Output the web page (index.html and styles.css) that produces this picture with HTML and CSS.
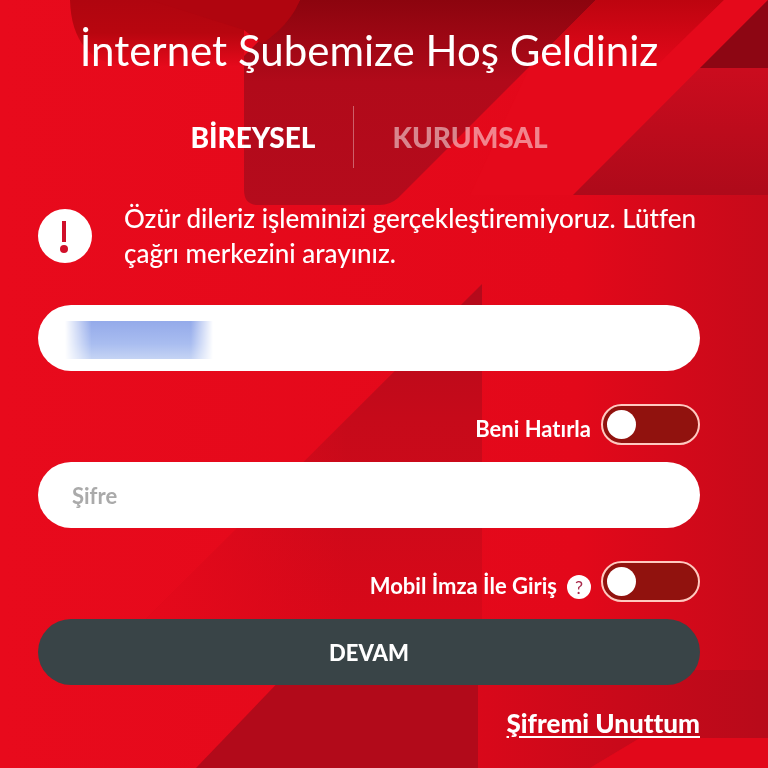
FILE: index.html
```
<!DOCTYPE html>
<html lang="tr">
<head>
  <meta charset="UTF-8">
  <meta name="viewport" content="width=device-width, initial-scale=1.0">
  <title>İnternet Şubesi</title>
  <link rel="stylesheet" href="styles.css">
</head>
<body>
  <svg class="backdrop" viewBox="0 0 768 768" preserveAspectRatio="none" aria-hidden="true">
    <defs>
      <linearGradient id="base" x1="0" y1="0" x2="1" y2="0">
        <stop offset="0" stop-color="#e80a1c"/>
        <stop offset="0.75" stop-color="#e3081a"/>
        <stop offset="1" stop-color="#c60a1a"/>
      </linearGradient>
      <linearGradient id="topFade" x1="0" y1="0" x2="0" y2="1">
        <stop offset="0" stop-color="#b0050f"/>
        <stop offset="0.5" stop-color="#b8060f"/>
        <stop offset="1" stop-color="#e5091b"/>
      </linearGradient>
      <linearGradient id="darkFade" x1="0" y1="0" x2="0" y2="1">
        <stop offset="0" stop-color="#8c040e"/>
        <stop offset="0.4" stop-color="#b10a1a"/>
        <stop offset="1" stop-color="#b50b1c"/>
      </linearGradient>
      <linearGradient id="topRight" x1="0" y1="0" x2="0" y2="1">
        <stop offset="0" stop-color="#bd040f"/>
        <stop offset="1" stop-color="#e3081a"/>
      </linearGradient>
      <linearGradient id="rightFade" x1="0" y1="1" x2="0" y2="0">
        <stop offset="0" stop-color="#ae0a1a"/>
        <stop offset="1" stop-color="#cb0c1e"/>
      </linearGradient>
      <linearGradient id="midFade" x1="0" y1="1" x2="0" y2="0">
        <stop offset="0" stop-color="#d80819"/>
        <stop offset="0.6" stop-color="#c60a1a"/>
        <stop offset="1" stop-color="#b30a1b"/>
      </linearGradient>
      <linearGradient id="midEdge" x1="0" y1="0" x2="1" y2="0">
        <stop offset="0" stop-color="#e5091b"/>
        <stop offset="0.6" stop-color="#e5091b" stop-opacity="0"/>
      </linearGradient>
      <linearGradient id="lowRight" x1="0" y1="0" x2="1" y2="0">
        <stop offset="0" stop-color="#d9081a"/>
        <stop offset="1" stop-color="#b80a1a"/>
      </linearGradient>
    </defs>
    <rect width="768" height="768" fill="url(#base)"/>
    <path d="M70 0C71 40 90 66 130 66H244V30L300 0z" fill="url(#topFade)"/>
    <path d="M300 0H596L398 198Q390 205 380 205H258Q244 205 244 190V56z" fill="url(#darkFade)"/>
    <path d="M300 0C293 16 284 28 262 44L244 30L150 0z" fill="#b0050f"/>
    <path d="M596 0H724L656 66H530z" fill="url(#topRight)"/>
    <path d="M724 0H768L573 195H470L530 66H656z" fill="#e5091b"/>
    <path d="M768 0V68H700z" fill="#8d0613"/>
    <path d="M700 68H768V195H573z" fill="url(#rightFade)"/>
    <path d="M482 284V620H145z" fill="url(#midFade)"/>
    <path d="M482 284V620H145z" fill="url(#midEdge)"/>
    <path d="M290 670H478V768H196z" fill="#b20a1a"/>
    <path d="M478 670H768V738H640L590 768H478z" fill="url(#lowRight)"/>
    <path d="M640 738H768V768H590z" fill="#e2081a"/>
  </svg>

  <main class="login">
    <h1 class="login-title">İnternet Şubemize Hoş Geldiniz</h1>

    <div class="tabs" role="tablist">
      <button type="button" class="tab active" role="tab" aria-selected="true">BİREYSEL</button>
      <button type="button" class="tab" role="tab" aria-selected="false">KURUMSAL</button>
    </div>

    <div class="alert" role="alert">
      <svg class="alert-icon" viewBox="0 0 54 54" aria-hidden="true">
        <circle cx="27" cy="27" r="27" fill="#fff"/>
        <path d="M26 12V33" stroke="#d0102a" stroke-width="4"/>
        <circle cx="26" cy="40" r="4" fill="#d0102a"/>
      </svg>
      <p class="alert-text">Özür dileriz işleminizi gerçekleştiremiyoruz. Lütfen çağrı merkezini arayınız.</p>
    </div>

    <form id="loginForm">
      <div class="field">
        <input type="text" class="field-input" id="customerNo" aria-label="Müşteri numarası">
        <span class="field-mask"></span>
      </div>

      <div class="option">
        <label class="option-label" for="remember">Beni Hatırla</label>
        <input type="checkbox" class="switch" id="remember">
      </div>

      <div class="field">
        <input type="password" class="field-input" id="password" placeholder="Şifre" aria-label="Şifre">
      </div>

      <div class="option">
        <label class="option-label" for="mobileSign">Mobil İmza İle Giriş</label>
        <button type="button" class="help">?</button>
        <input type="checkbox" class="switch" id="mobileSign">
      </div>

      <button type="submit" class="submit">DEVAM</button>
    </form>

    <a href="#" class="forgot">Şifremi Unuttum</a>
  </main>
</body>
</html>
```
FILE: styles.css
```
* {
  box-sizing: border-box;
}

body {
  margin: 0;
  min-height: 100vh;
  font-family: Lato, sans-serif;
  font-variant-ligatures: none;
  color: #fff;
  background: #e5091b;
}

button,
input {
  font-family: inherit;
}

.backdrop {
  position: fixed;
  inset: 0;
  z-index: -1;
  width: 100%;
  height: 100%;
}

.login {
  display: flex;
  flex-direction: column;
  padding: 22px 68px 24px 38px;
}

.login-title {
  margin: 0;
  font-size: 42px;
  font-weight: 400;
  line-height: 56px;
  text-align: center;
}

.tabs {
  display: flex;
  justify-content: center;
  margin-top: 28px;
}

.tab {
  height: 62px;
  padding: 0 38px 0 34px;
  border: none;
  background: none;
  font-size: 28px;
  font-weight: 900;
  color: rgba(255, 255, 255, 0.5);
  cursor: pointer;
}

.tab + .tab {
  padding: 0 34px 0 38px;
  border-left: 1px solid rgba(255, 255, 255, 0.35);
}

.tab.active {
  color: #fff;
}

.alert {
  display: flex;
  align-items: center;
  gap: 32px;
  margin-top: 33px;
}

.alert-icon {
  flex: none;
  width: 54px;
  height: 54px;
}

.alert-text {
  margin: 0;
  font-size: 26px;
  font-weight: 500;
  line-height: 35px;
}

form {
  margin-top: 34px;
}

.field {
  position: relative;
}

.field-input {
  display: block;
  width: 100%;
  height: 66px;
  padding: 0 34px;
  border: none;
  border-radius: 33px;
  outline: none;
  background: #fff;
  font-size: 22px;
  color: #333;
}

.field-input::placeholder {
  color: #aaa;
  font-weight: 700;
}

.field-mask {
  position: absolute;
  top: 16px;
  left: 27px;
  width: 148px;
  height: 38px;
  background: linear-gradient(#94aaea, #a9bdf0 60%, #c5d4f4);
  -webkit-mask-image: linear-gradient(90deg, transparent, #000 18%, #000 85%, transparent);
  mask-image: linear-gradient(90deg, transparent, #000 18%, #000 85%, transparent);
}

.option {
  display: flex;
  align-items: flex-end;
  justify-content: flex-end;
  gap: 10px;
  padding: 33px 0 17px;
}

.option-label {
  font-size: 22px;
  font-weight: 700;
  line-height: 32px;
}

.help {
  width: 24px;
  height: 24px;
  margin-bottom: 3px;
  padding: 0;
  border: none;
  border-radius: 50%;
  background: #fff;
  font-size: 18px;
  line-height: 24px;
  color: #a8294a;
  cursor: pointer;
}

.switch {
  appearance: none;
  display: flex;
  align-items: center;
  width: 99px;
  height: 41px;
  margin: 0;
  padding: 0 4px;
  border: 2px solid #ffc9c0;
  border-radius: 21px;
  background: #91120e;
  cursor: pointer;
}

.switch::before {
  content: "";
  width: 29px;
  height: 29px;
  border-radius: 50%;
  background: #fff;
}

.switch:checked {
  justify-content: flex-end;
}

.submit {
  width: 100%;
  height: 66px;
  border: none;
  border-radius: 33px;
  background: #394447;
  font-size: 22px;
  font-weight: 900;
  color: #fff;
  cursor: pointer;
}

.forgot {
  align-self: flex-end;
  margin-top: 21px;
  font-size: 26px;
  font-weight: 900;
  line-height: 34px;
  color: #fff;
  text-underline-offset: 3px;
}
```
